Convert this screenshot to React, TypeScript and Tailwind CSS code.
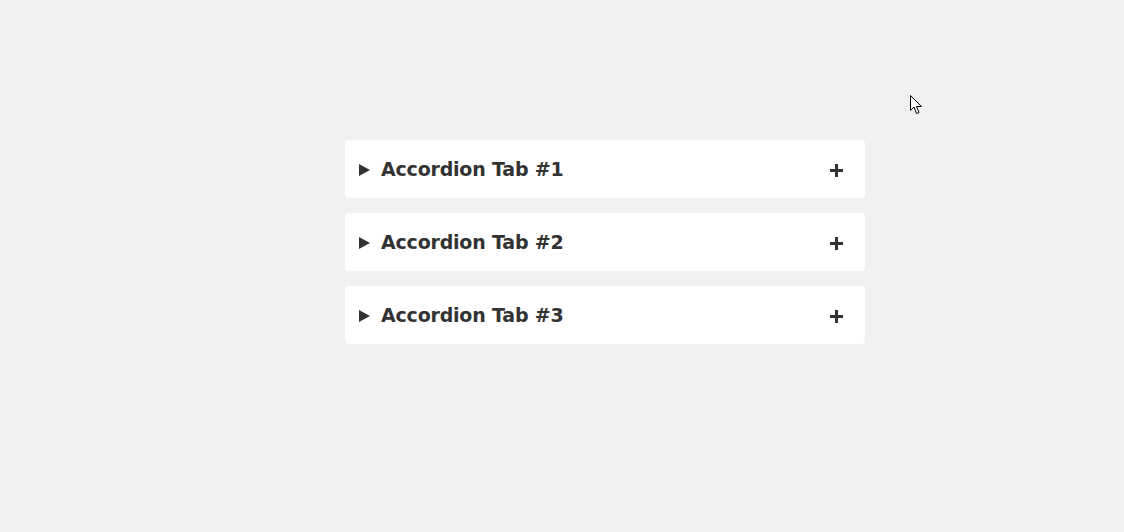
import { useState } from 'react';

const tabs = ['Accordion Tab #1', 'Accordion Tab #2', 'Accordion Tab #3'];

export default function App() {
  const [open, setOpen] = useState<number | null>(null);

  return (
    <main className="relative min-h-screen w-full bg-[#f1f1f1] pl-[345px] pt-[140px] font-['DejaVu_Sans',sans-serif] text-[#333]">
      <div className="flex w-[520px] flex-col gap-[15px]">
        {tabs.map((tab, i) => (
          <button
            key={tab}
            onClick={() => setOpen(open === i ? null : i)}
            className="flex h-[58px] w-full items-center rounded-[4px] bg-white pl-[14px] pr-[22px] text-left"
          >
            <svg width="11" height="12" viewBox="0 0 11 12" className="mt-[1px] shrink-0">
              <path d="M0 0 L11 6 L0 12 Z" fill="#333" />
            </svg>
            <span className="ml-[11px] flex-1 text-[19px] font-bold leading-none tracking-[-0.2px]">{tab}</span>
            <svg width="13" height="13" viewBox="0 0 13 13" className="mt-[2px] shrink-0">
              <rect x="5" y="0" width="3" height="13" fill="#333" />
              <rect x="0" y="5" width="13" height="3" fill="#333" />
            </svg>
          </button>
        ))}
      </div>
      {/* mouse pointer captured in the screenshot */}
      <svg width="13" height="20" viewBox="0 0 13 20" className="pointer-events-none absolute left-[910px] top-[95px]">
        <path d="M0.5 0.5 L0.5 15.5 L4 12 L6.5 18.5 L9 17.5 L6.5 11.5 L11.5 11.5 Z" fill="#fff" stroke="#000" strokeWidth="1" />
      </svg>
    </main>
  );
}
